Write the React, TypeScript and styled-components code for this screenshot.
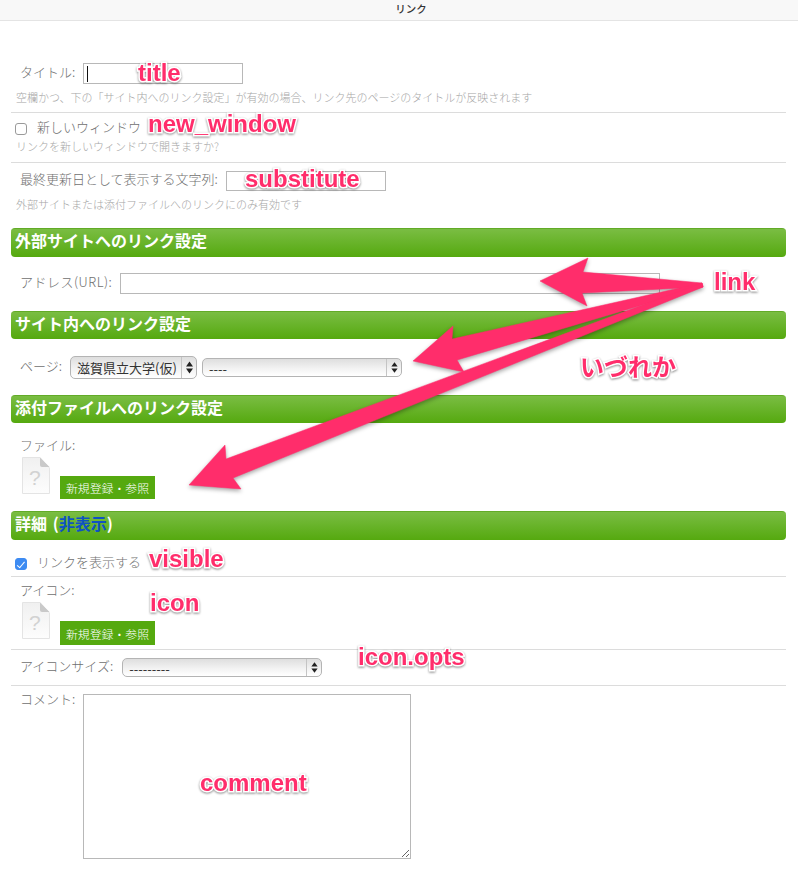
import React from "react";
import styled, { createGlobalStyle } from "styled-components";

const GlobalStyle = createGlobalStyle`
  html, body { margin: 0; padding: 0; background: #fff; }
  body {
    font-family: "Noto Sans CJK JP", "Liberation Sans", sans-serif;
    font-weight: 300;
    color: #666;
  }
`;

const Page = styled.div`
  position: relative;
  width: 798px;
  height: 889px;
  overflow: hidden;
`;

const TitleBar = styled.header`
  height: 20px;
  padding-left: 24px;
  background: #f8f8f8;
  border-bottom: 1px solid #e4e4e4;
  font-size: 10.5px;
  font-weight: 500;
  line-height: 17px;
  color: #333;
  text-align: center;
`;

const Form = styled.form`
  margin: 0 12px 0 11px;
  padding-top: 42px;
`;

const Row = styled.div<{ $h: number; $line?: boolean; $pad?: number }>`
  height: ${(p) => p.$h}px;
  padding: ${(p) => p.$pad ?? 0}px 0 0 9px;
  box-sizing: border-box;
  border-bottom: ${(p) => (p.$line ? "1px solid #dcdcdc" : "none")};
`;

const Field = styled.div<{ $gap?: number }>`
  display: flex;
  align-items: center;
  gap: ${(p) => p.$gap ?? 8}px;
`;

const Label = styled.label<{ $track?: number }>`
  margin-top: -4px;
  font-size: 13px;
  line-height: 20px;
  letter-spacing: ${(p) => p.$track ?? 0}px;
  color: #707070;
  white-space: nowrap;
`;

const StackLabel = styled.label`
  display: block;
  font-size: 13px;
  line-height: 16px;
  color: #707070;
  white-space: nowrap;
`;

const Hint = styled.p<{ $top: number }>`
  margin: ${(p) => p.$top}px 0 0 -4px;
  font-size: 11px;
  line-height: 14px;
  color: #a6a6a6;
  white-space: nowrap;
`;

const TextInput = styled.input<{ $w: number; $h: number }>`
  width: ${(p) => p.$w}px;
  height: ${(p) => p.$h}px;
  box-sizing: border-box;
  margin: 0;
  padding: 0;
  border: 1px solid #b8b8b8;
  border-radius: 0;
  background: #fff;
  outline: none;
`;

const Caret = styled.span`
  position: absolute;
  left: 87px;
  top: 66px;
  width: 1px;
  height: 16px;
  background: #111;
`;

const CheckRow = styled.div`
  display: flex;
  align-items: center;
  gap: 10px;
  margin-left: -5px;
`;

const Checkbox = styled.input`
  appearance: none;
  position: relative;
  width: 12px;
  height: 12px;
  margin: 0;
  flex: none;
  box-sizing: border-box;
  border: 1px solid #9a9a9a;
  border-radius: 3px;
  background: #fff;
  &:checked {
    background: #3d8bf2;
    border-color: #3d8bf2;
  }
  &:checked::after {
    content: "";
    position: absolute;
    left: 3px;
    top: 0.5px;
    width: 3px;
    height: 6.5px;
    border: solid #fff;
    border-width: 0 1.6px 1.6px 0;
    transform: rotate(40deg);
  }
`;

const SectionBar = styled.h2<{ $h: number }>`
  margin: 0;
  height: ${(p) => p.$h}px;
  padding-left: 4px;
  box-sizing: border-box;
  border-top: 1px solid #62ab27;
  border-radius: 4px;
  background: linear-gradient(#7abd43, #55a90f);
  font-size: 16px;
  font-weight: 700;
  line-height: 23px;
  word-spacing: 2px;
  color: #fff;
  white-space: nowrap;
`;

const BarLink = styled.a`
  color: #0f52c4;
`;

const SelectWrap = styled.div<{ $w: number; $h: number; $left?: number }>`
  position: relative;
  width: ${(p) => p.$w}px;
  height: ${(p) => p.$h}px;
  margin-left: ${(p) => p.$left ?? 0}px;
  flex: none;
`;

const Select = styled.select`
  appearance: none;
  display: block;
  width: 100%;
  height: 100%;
  margin: 0;
  padding: 0 0 0 6px;
  box-sizing: border-box;
  border: 1px solid #b4b4b4;
  border-radius: 5px;
  background: linear-gradient(#dedede, #f2f2f2 55%, #fff);
  font-family: inherit;
  font-size: 13px;
  font-weight: 400;
  color: #333;
  outline: none;
`;

const Stepper = styled.svg`
  position: absolute;
  right: 0;
  top: 1px;
  width: 16px;
  height: calc(100% - 2px);
  border-left: 1px solid #c4c4c4;
  box-sizing: border-box;
  pointer-events: none;
`;

const UploadBlock = styled.div`
  display: flex;
  align-items: flex-end;
  gap: 10px;
  margin: 4px 0 0 2px;
`;

const FileIcon = styled.svg`
  flex: none;
`;

const UploadButton = styled.button<{ $h: number; $low: number }>`
  width: 95px;
  height: ${(p) => p.$h}px;
  margin: 0 0 ${(p) => p.$low}px;
  padding: 0;
  border: none;
  border-radius: 0;
  background: #55a90f;
  font-family: inherit;
  font-size: 11.9px;
  font-weight: 300;
  color: #fff;
  white-space: nowrap;
`;

const CommentField = styled.div`
  display: flex;
  align-items: flex-start;
  gap: 8px;
`;

const CommentLabel = styled(StackLabel)`
  margin-top: -3px;
`;

const CommentBox = styled.textarea`
  display: block;
  width: 328px;
  height: 165px;
  box-sizing: border-box;
  margin: 0;
  padding: 0;
  border: 1px solid #b8b8b8;
  border-radius: 0;
  outline: none;
`;

const ArrowLayer = styled.svg`
  position: absolute;
  left: 0;
  top: 0;
  pointer-events: none;
  filter: drop-shadow(0 2px 2px rgba(0, 0, 0, 0.35));
`;

const Note = styled.span<{ $x: number; $y: number }>`
  position: absolute;
  left: ${(p) => p.$x}px;
  top: ${(p) => p.$y}px;
  font-family: "Liberation Sans", "Noto Sans CJK JP", sans-serif;
  font-size: 24px;
  font-weight: 700;
  line-height: 28px;
  color: #ff2d6b;
  white-space: nowrap;
  -webkit-text-stroke: 3px #fff;
  paint-order: stroke fill;
  filter: drop-shadow(0 1px 1px rgba(0, 0, 0, 0.45));
`;

const ARROWS = [
  "703,287 702,283 583,272 588,258 540,281 587,306 582,293",
  "703,287 702,283 452,339 453,326 413,361 464,372 457,360",
  "703,287 702,283 226,459 225,445 189,485 241,489 233,478",
];

function UpDown() {
  return (
    <Stepper viewBox="0 0 15 19" preserveAspectRatio="xMidYMid meet">
      <path d="M7.5 3.5 L11 8.5 H4 Z M7.5 15.5 L4 10.5 H11 Z" fill="#222" />
    </Stepper>
  );
}

function BlankFile() {
  return (
    <FileIcon width="28" height="37" viewBox="0 0 28 37">
      <defs>
        <linearGradient id="fileFace" x1="0" y1="0" x2="0" y2="1">
          <stop offset="0" stopColor="#f0f0f0" />
          <stop offset="1" stopColor="#fdfdfd" />
        </linearGradient>
      </defs>
      <path d="M0.5 0.5 H18 L27.5 11 V36.5 H0.5 Z" fill="url(#fileFace)" stroke="#e4e4e4" />
      <path d="M18 0.5 V8 Q18 10 20 10 H27.5 Z" fill="#c9c9c9" />
      <text x="7" y="28" fontSize="21" fontFamily="Liberation Sans, sans-serif" fill="#d2d2d2">
        ?
      </text>
    </FileIcon>
  );
}

export default function App() {
  return (
    <Page>
      <GlobalStyle />
      <TitleBar>リンク</TitleBar>
      <Form>
        <Row $h={50} $line>
          <Field>
            <Label>タイトル:</Label>
            <TextInput $w={160} $h={21} />
          </Field>
          <Hint $top={6}>空欄かつ、下の「サイト内へのリンク設定」が有効の場合、リンク先のページのタイトルが反映されます</Hint>
        </Row>
        <Row $h={50} $line $pad={8}>
          <CheckRow>
            <Checkbox type="checkbox" />
            <Label>新しいウィンドウ</Label>
          </CheckRow>
          <Hint $top={2}>リンクを新しいウィンドウで開きますか?</Hint>
        </Row>
        <Row $h={65} $pad={8}>
          <Field>
            <Label>最終更新日として表示する文字列:</Label>
            <TextInput $w={160} $h={20} />
          </Field>
          <Hint $top={6}>外部サイトまたは添付ファイルへのリンクにのみ有効です</Hint>
        </Row>
        <SectionBar $h={29}>外部サイトへのリンク設定</SectionBar>
        <Row $h={54} $pad={16}>
          <Field>
            <Label $track={0.5}>アドレス(URL):</Label>
            <TextInput $w={540} $h={21} />
          </Field>
        </Row>
        <SectionBar $h={28}>サイト内へのリンク設定</SectionBar>
        <Row $h={56} $pad={17}>
          <Field>
            <Label>ページ:</Label>
            <SelectWrap $w={127} $h={23}>
              <Select defaultValue="a">
                <option value="a">滋賀県立大学(仮)</option>
              </Select>
              <UpDown />
            </SelectWrap>
            <SelectWrap $w={200} $h={19} $left={-3}>
              <Select defaultValue="b">
                <option value="b">----</option>
              </Select>
              <UpDown />
            </SelectWrap>
          </Field>
        </Row>
        <SectionBar $h={28}>添付ファイルへのリンク設定</SectionBar>
        <Row $h={88} $pad={14}>
          <StackLabel>ファイル:</StackLabel>
          <UploadBlock>
            <BlankFile />
            <UploadButton type="button" $h={23} $low={-5}>新規登録・参照</UploadButton>
          </UploadBlock>
        </Row>
        <SectionBar $h={29}>
          詳細 (<BarLink>非表示</BarLink>)
        </SectionBar>
        <Row $h={37} $line $pad={16}>
          <CheckRow>
            <Checkbox type="checkbox" defaultChecked />
            <Label>リンクを表示する</Label>
          </CheckRow>
        </Row>
        <Row $h={73} $line $pad={5}>
          <StackLabel>アイコン:</StackLabel>
          <UploadBlock>
            <BlankFile />
            <UploadButton type="button" $h={24} $low={-6}>新規登録・参照</UploadButton>
          </UploadBlock>
        </Row>
        <Row $h={36} $line $pad={8}>
          <Field $gap={9}>
            <Label>アイコンサイズ:</Label>
            <SelectWrap $w={200} $h={19}>
              <Select defaultValue="c">
                <option value="c">---------</option>
              </Select>
              <UpDown />
            </SelectWrap>
          </Field>
        </Row>
        <Row $h={180} $pad={8}>
          <CommentField>
            <CommentLabel>コメント:</CommentLabel>
            <CommentBox />
          </CommentField>
        </Row>
      </Form>

      <Caret />

      <ArrowLayer width="798" height="889">
        {ARROWS.map((points) => (
          <polygon key={points} points={points} fill="#ff2d6b" stroke="#ff2d6b" strokeWidth="0.5" strokeLinejoin="round" />
        ))}
      </ArrowLayer>

      <Note $x={138} $y={59}>title</Note>
      <Note $x={148} $y={110}>new_window</Note>
      <Note $x={245} $y={165}>substitute</Note>
      <Note $x={714} $y={268}>link</Note>
      <Note $x={580} $y={354}>いづれか</Note>
      <Note $x={149} $y={545}>visible</Note>
      <Note $x={150} $y={589}>icon</Note>
      <Note $x={358} $y={643}>icon.opts</Note>
      <Note $x={200} $y={769}>comment</Note>
    </Page>
  );
}
